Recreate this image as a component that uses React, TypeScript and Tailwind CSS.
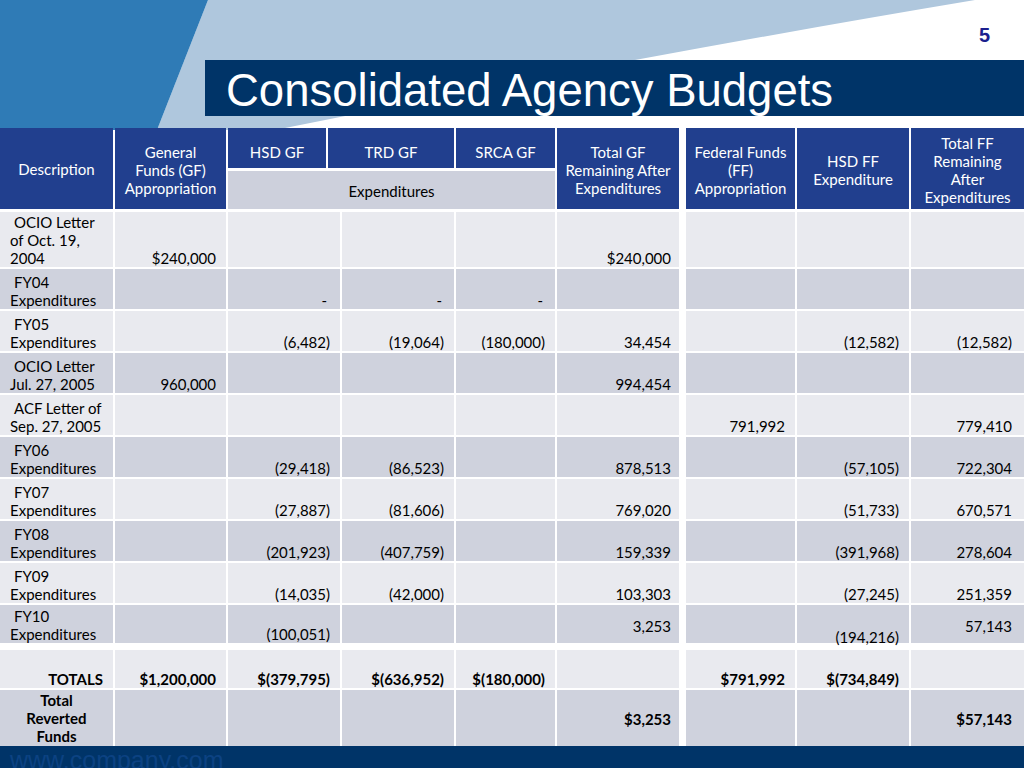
import React from "react";

const GRID =
  "grid grid-cols-[113px_111px_112px_112px_99px_122px_3px_109px_112px_113px] gap-x-[2px]";
const LIGHT = "bg-[#e9eaef]";
const DARK = "bg-[#cfd2dd]";
const HEAD = "bg-[#213f8e] text-white";

const PR = [
  "pr-[10px]",
  "pr-[10px]",
  "pr-[10px]",
  "pr-[10px]",
  "pr-[8px]",
  "pr-[10px]",
  "pr-[10px]",
  "pr-[12px]",
];

type V = string | { t: string; cls: string };

type Row = { desc: string[]; vals: V[]; h: string };

const rows: Row[] = [
  {
    desc: ["OCIO Letter", "of Oct. 19,", "2004"],
    h: "h-[55px]",
    vals: ["$240,000", "", "", "", "$240,000", "", "", ""],
  },
  {
    desc: ["FY04", "Expenditures"],
    h: "h-[40px]",
    vals: [
      "",
      { t: "-", cls: "pr-[13px]" },
      { t: "-", cls: "pr-[12px]" },
      { t: "-", cls: "pr-[12px]" },
      "",
      "",
      "",
      "",
    ],
  },
  {
    desc: ["FY05", "Expenditures"],
    h: "h-[40px]",
    vals: ["", "(6,482)", "(19,064)", "(180,000)", "34,454", "", "(12,582)", "(12,582)"],
  },
  {
    desc: ["OCIO Letter", "Jul. 27, 2005"],
    h: "h-[40px]",
    vals: ["960,000", "", "", "", "994,454", "", "", ""],
  },
  {
    desc: ["ACF Letter of", "Sep. 27, 2005"],
    h: "h-[40px]",
    vals: ["", "", "", "", "", "791,992", "", "779,410"],
  },
  {
    desc: ["FY06", "Expenditures"],
    h: "h-[40px]",
    vals: ["", "(29,418)", "(86,523)", "", "878,513", "", "(57,105)", "722,304"],
  },
  {
    desc: ["FY07", "Expenditures"],
    h: "h-[40px]",
    vals: ["", "(27,887)", "(81,606)", "", "769,020", "", "(51,733)", "670,571"],
  },
  {
    desc: ["FY08", "Expenditures"],
    h: "h-[40px]",
    vals: ["", "(201,923)", "(407,759)", "", "159,339", "", "(391,968)", "278,604"],
  },
  {
    desc: ["FY09", "Expenditures"],
    h: "h-[40px]",
    vals: ["", "(14,035)", "(42,000)", "", "103,303", "", "(27,245)", "251,359"],
  },
  {
    desc: ["FY10", "Expenditures"],
    h: "h-[38px]",
    vals: [
      "",
      "(100,051)",
      "",
      "",
      { t: "3,253", cls: "pr-[8px] pb-[8px]" },
      "",
      { t: "(194,216)", cls: "pr-[10px] mb-[-3px]" },
      { t: "57,143", cls: "pr-[12px] pb-[8px]" },
    ],
  },
];

function ValCell({ v, i, bg }: { v: V; i: number; bg: string }) {
  const t = typeof v === "string" ? v : v.t;
  const cls = typeof v === "string" ? PR[i] : v.cls;
  return (
    <div className={`${bg} flex flex-col items-end justify-end`}>
      <div className={`leading-[18px] whitespace-nowrap ${cls}`}>{t}</div>
    </div>
  );
}

function DataRow({ row, dark }: { row: Row; dark: boolean }) {
  const bg = dark ? DARK : LIGHT;
  return (
    <div className={`${GRID} ${row.h}`}>
      <div className={`${bg} flex flex-col justify-end pl-[10px]`}>
        {row.desc.map((l, k) => (
          <div
            key={k}
            className={`leading-[18px] whitespace-nowrap ${k === 0 ? "pl-[4px]" : ""}`}
          >
            {l}
          </div>
        ))}
      </div>
      {row.vals.slice(0, 5).map((v, i) => (
        <ValCell key={i} v={v} i={i} bg={bg} />
      ))}
      <div />
      {row.vals.slice(5).map((v, i) => (
        <ValCell key={i + 5} v={v} i={i + 5} bg={bg} />
      ))}
    </div>
  );
}

function HeadLines({ lines, extra = "" }: { lines: string[]; extra?: string }) {
  return (
    <div className={`${HEAD} flex flex-col items-center justify-center text-center ${extra}`}>
      {lines.map((l, k) => (
        <div key={k} className="leading-[18px] whitespace-nowrap">
          {l}
        </div>
      ))}
    </div>
  );
}

export default function App() {
  return (
    <div className="relative w-[1024px] h-[768px] overflow-hidden bg-white font-['Lato',sans-serif] text-[15px] text-black">
      <svg
        className="absolute left-0 top-0"
        width="1024"
        height="130"
        viewBox="0 0 1024 130"
      >
        <path d="M208 0 L975 0 Q640 56 275 130 L157 130 Z" fill="#afc7dd" />
        <path d="M0 0 L208 0 L157 130 L0 130 Z" fill="#2f7bb6" />
      </svg>

      <div className="relative flex flex-col">
        {/* top banner */}
        <div className="h-[60px] flex justify-end pr-[34px] pt-[25px]">
          <span className="font-['Liberation_Sans',Arial,sans-serif] font-bold text-[20px] leading-[20px] text-[#1b1f8e]">
            5
          </span>
        </div>
        <div className="ml-[205px] h-[56px] bg-[#003468] pl-[21px] pt-[8px]">
          <h1 className="font-['Liberation_Sans',Arial,sans-serif] text-[45.5px] leading-[45px] text-white whitespace-nowrap">
            Consolidated Agency Budgets
          </h1>
        </div>
        <div className="h-[12px]" />

        {/* table */}
        <div className="flex flex-col gap-[2px]">
          <div className={`${GRID} h-[81px] mb-[1px]`}>
            <HeadLines lines={["Description"]} />
            <HeadLines lines={["General", "Funds (GF)", "Appropriation"]} extra="pt-[2px]" />
            <div className="col-span-3 flex flex-col gap-[3px]">
              <div className="flex gap-[2px] h-[40px]">
                <div className={`${HEAD} w-[98px] flex justify-center pt-[15px] leading-[18px]`}>
                  HSD GF
                </div>
                <div className={`${HEAD} w-[126px] flex justify-center pt-[15px] leading-[18px]`}>
                  TRD GF
                </div>
                <div className={`${HEAD} flex-1 flex justify-center pt-[15px] leading-[18px]`}>
                  SRCA GF
                </div>
              </div>
              <div className="flex-1 bg-[#cdd0dc] flex items-center justify-center leading-[18px] pt-[2px]">
                Expenditures
              </div>
            </div>
            <HeadLines lines={["Total GF", "Remaining After", "Expenditures"]} extra="pt-[2px]" />
            <div />
            <HeadLines lines={["Federal Funds", "(FF)", "Appropriation"]} extra="pt-[2px]" />
            <HeadLines lines={["HSD FF", "Expenditure"]} extra="pt-[2px]" />
            <HeadLines lines={["Total FF", "Remaining", "After", "Expenditures"]} extra="pt-[2px]" />
          </div>

          {rows.map((r, i) => (
            <DataRow key={i} row={r} dark={i % 2 === 1} />
          ))}

          {/* totals */}
          <div className={`${GRID} h-[38px] mt-[5px] font-bold`}>
            <div className={`${LIGHT} flex flex-col items-end justify-end pr-[10px]`}>
              <div className="leading-[18px]">TOTALS</div>
            </div>
            {["$1,200,000", "$(379,795)", "$(636,952)", "$(180,000)", ""].map((v, i) => (
              <ValCell key={i} v={v} i={i} bg={LIGHT} />
            ))}
            <div />
            {["$791,992", "$(734,849)", ""].map((v, i) => (
              <ValCell key={i + 5} v={v} i={i + 5} bg={LIGHT} />
            ))}
          </div>

          {/* reverted */}
          <div className={`${GRID} h-[56px] font-bold`}>
            <div className={`${DARK} flex flex-col items-center justify-center text-center`}>
              <div className="leading-[18px]">Total</div>
              <div className="leading-[18px]">Reverted</div>
              <div className="leading-[18px]">Funds</div>
            </div>
            <div className={DARK} />
            <div className={DARK} />
            <div className={DARK} />
            <div className={DARK} />
            <div className={`${DARK} flex items-center justify-end pr-[8px] pt-[2px]`}>
              <div className="leading-[18px]">$3,253</div>
            </div>
            <div />
            <div className={DARK} />
            <div className={DARK} />
            <div className={`${DARK} flex items-center justify-end pr-[12px] pt-[2px]`}>
              <div className="leading-[18px]">$57,143</div>
            </div>
          </div>
        </div>

        {/* footer */}
        <div className="h-[22px] bg-[#003468] overflow-hidden pl-[10px] pt-[2px]">
          <div className="font-['Liberation_Sans',Arial,sans-serif] text-[25px] leading-[25px] text-[#0c4282] whitespace-nowrap">
            www.company.com
          </div>
        </div>
      </div>
    </div>
  );
}
